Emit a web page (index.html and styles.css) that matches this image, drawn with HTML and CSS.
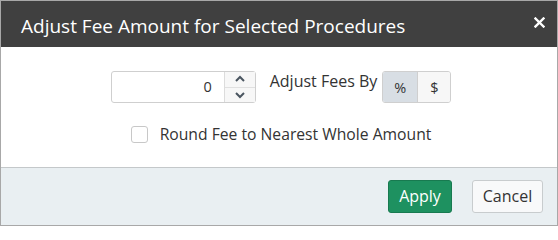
FILE: index.html
```html
<!DOCTYPE html>
<html>
<head>
<meta charset="utf-8">
<link rel="stylesheet" href="styles.css">
</head>
<body>
<div class="dialog">
  <div class="header">
    <div class="title">Adjust Fee Amount for Selected Procedures</div>
    <div class="close">
      <svg width="11" height="11" viewBox="0 0 11 11"><path d="M1.5 1.5 L9.5 9.5 M9.5 1.5 L1.5 9.5" stroke="#fff" stroke-width="2.4" stroke-linecap="square"/></svg>
    </div>
  </div>
  <div class="content">
    <div class="row">
      <div class="numeric">
        <div class="num-input">0</div>
        <div class="spinner">
          <div class="spin up"><svg width="12" height="8" viewBox="0 0 12 8"><path d="M2 6 L6 2 L10 6" fill="none" stroke="#4a5560" stroke-width="2"/></svg></div>
          <div class="spin down"><svg width="12" height="8" viewBox="0 0 12 8"><path d="M2 2 L6 6 L10 2" fill="none" stroke="#4a5560" stroke-width="2"/></svg></div>
        </div>
      </div>
      <div class="label">Adjust Fees By</div>
      <div class="seg">
        <div class="seg-btn active">%</div>
        <div class="seg-btn">$</div>
      </div>
    </div>
    <div class="check-row">
      <div class="checkbox"></div>
      <div class="check-label">Round Fee to Nearest Whole Amount</div>
    </div>
  </div>
  <div class="footer">
    <div class="btn primary">Apply</div>
    <div class="btn secondary">Cancel</div>
  </div>
</div>
</body>
</html>
```
FILE: styles.css
```css
* { box-sizing: border-box; }
body {
  margin: 0;
  font-family: "Open Sans", "Noto Sans", sans-serif;
  background: #fff;
}
.dialog {
  width: 558px;
  height: 226px;
  border: 1px solid #a8a8a8;
  display: flex;
  flex-direction: column;
}
.header {
  height: 46px;
  background: #404040;
  display: flex;
  align-items: center;
  justify-content: space-between;
  padding: 0 11px 0 20px;
}
.title {
  color: #fff;
  font-size: 19px;
  line-height: 26px;
  padding-top: 3px;
}
.close {
  width: 13px;
  height: 13px;
  display: flex;
  align-items: center;
  justify-content: center;
  margin-bottom: 4px;
}
.content {
  height: 120px;
  background: #fff;
  padding-top: 24px;
  display: flex;
  flex-direction: column;
  align-items: center;
}
.row {
  display: flex;
  align-items: flex-start;
  margin-left: 4px;
}
.numeric {
  display: flex;
  height: 32px;
  border: 1px solid #cfcfcf;
  border-radius: 3px;
  width: 145px;
}
.num-input {
  width: 112px;
  text-align: right;
  padding-right: 12px;
  font-size: 14.5px;
  line-height: 30px;
  color: #333;
}
.spinner {
  flex: 1;
  border-left: 1px solid #dcdcdc;
  background: #f7f7f7;
  display: flex;
  flex-direction: column;
}
.spin {
  flex: 1;
  display: flex;
  align-items: center;
  justify-content: center;
}
.spin.up { border-bottom: 1px solid #e0e0e0; }
.label {
  margin-left: 14px;
  font-size: 16px;
  line-height: 22px;
  color: #333;
  margin-top: -1px;
}
.seg {
  display: flex;
  margin-left: 5px;
  height: 32px;
  border: 1px solid #cfcfcf;
  border-radius: 3px;
  overflow: hidden;
}
.seg-btn {
  width: 32px;
  display: flex;
  align-items: center;
  justify-content: center;
  font-size: 14.5px;
  color: #333;
  background: #f7f7f7;
}
.seg-btn.active {
  width: 35px;
  background: #d8dee4;
  border-right: 1px solid #cfcfcf;
}
.check-row {
  display: flex;
  align-items: center;
  margin-top: 21px;
  margin-left: 4px;
}
.checkbox {
  width: 17px;
  height: 17px;
  border: 1px solid #c8c8c8;
  border-radius: 3px;
  background: #fff;
}
.check-label {
  margin-left: 12px;
  font-size: 15.7px;
  line-height: 20px;
  color: #333;
}
.footer {
  flex: 1;
  border-top: 1px solid #c4c8ca;
  background: #e9eff2;
  display: flex;
  justify-content: flex-end;
  align-items: flex-start;
  padding: 12px 14px 0 0;
  gap: 20px;
}
.btn {
  height: 33px;
  border-radius: 3px;
  display: flex;
  align-items: center;
  justify-content: center;
  font-size: 16px;
  padding-bottom: 1px;
}
.primary {
  width: 64px;
  background: #1e9160;
  border: 1px solid #187a50;
  color: #fff;
}
.secondary {
  width: 71px;
  background: #f8f9fa;
  border: 1px solid #c8ccce;
  color: #333;
}
```
